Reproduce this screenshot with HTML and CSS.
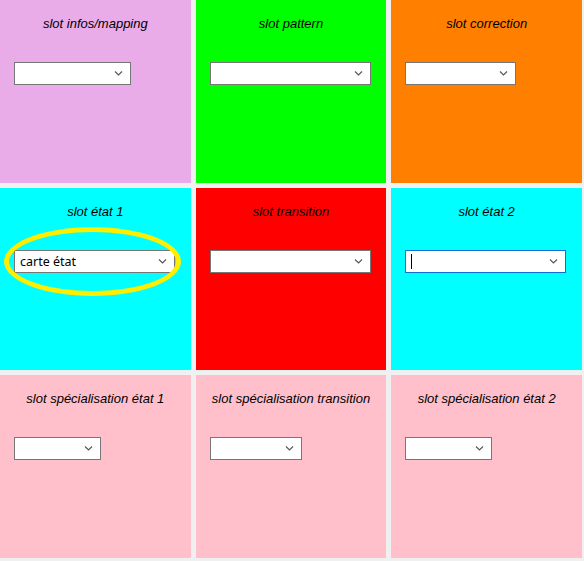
FILE: index.html
```html
<!DOCTYPE html>
<html>
<head>
<meta charset="utf-8">
<link rel="stylesheet" href="styles.css">
</head>
<body>
<div class="grid">
  <div class="cell c-plum">
    <div class="title">slot infos/mapping</div>
    <div class="combo w117"><span class="val"></span><svg class="chev" width="9" height="5" viewBox="0 0 9 5"><path d="M1 0.5 L4.5 4 L8 0.5" fill="none" stroke="#555" stroke-width="1.1"/></svg></div>
  </div>
  <div class="cell c-green">
    <div class="title">slot pattern</div>
    <div class="combo w161"><span class="val"></span><svg class="chev" width="9" height="5" viewBox="0 0 9 5"><path d="M1 0.5 L4.5 4 L8 0.5" fill="none" stroke="#555" stroke-width="1.1"/></svg></div>
  </div>
  <div class="cell c-orange">
    <div class="title">slot correction</div>
    <div class="combo w111"><span class="val"></span><svg class="chev" width="9" height="5" viewBox="0 0 9 5"><path d="M1 0.5 L4.5 4 L8 0.5" fill="none" stroke="#555" stroke-width="1.1"/></svg></div>
  </div>
  <div class="cell c-cyan">
    <div class="title">slot état 1</div>
    <div class="combo w161"><span class="val">carte état</span><svg class="chev" width="9" height="5" viewBox="0 0 9 5"><path d="M1 0.5 L4.5 4 L8 0.5" fill="none" stroke="#555" stroke-width="1.1"/></svg></div>
    <div class="ring"></div>
  </div>
  <div class="cell c-red">
    <div class="title">slot transition</div>
    <div class="combo w161"><span class="val"></span><svg class="chev" width="9" height="5" viewBox="0 0 9 5"><path d="M1 0.5 L4.5 4 L8 0.5" fill="none" stroke="#555" stroke-width="1.1"/></svg></div>
  </div>
  <div class="cell c-cyan">
    <div class="title">slot état 2</div>
    <div class="combo w161 focused"><span class="val"><span class="caret"></span></span><svg class="chev" width="9" height="5" viewBox="0 0 9 5"><path d="M1 0.5 L4.5 4 L8 0.5" fill="none" stroke="#555" stroke-width="1.1"/></svg></div>
  </div>
  <div class="cell c-pink">
    <div class="title">slot spécialisation état 1</div>
    <div class="combo w87"><span class="val"></span><svg class="chev" width="9" height="5" viewBox="0 0 9 5"><path d="M1 0.5 L4.5 4 L8 0.5" fill="none" stroke="#555" stroke-width="1.1"/></svg></div>
  </div>
  <div class="cell c-pink">
    <div class="title">slot spécialisation transition</div>
    <div class="combo w92"><span class="val"></span><svg class="chev" width="9" height="5" viewBox="0 0 9 5"><path d="M1 0.5 L4.5 4 L8 0.5" fill="none" stroke="#555" stroke-width="1.1"/></svg></div>
  </div>
  <div class="cell c-pink">
    <div class="title">slot spécialisation état 2</div>
    <div class="combo w87"><span class="val"></span><svg class="chev" width="9" height="5" viewBox="0 0 9 5"><path d="M1 0.5 L4.5 4 L8 0.5" fill="none" stroke="#555" stroke-width="1.1"/></svg></div>
  </div>
</div>
</body>
</html>
```
FILE: styles.css
```css
html, body {
  margin: 0;
  padding: 0;
  background: #f0f0f0;
}
.grid {
  width: 582px;
  height: 558px;
  display: grid;
  grid-template-columns: repeat(3, 1fr);
  grid-template-rows: repeat(3, 1fr);
  gap: 5px;
}
.cell {
  position: relative;
  padding-top: 16px;
  box-sizing: border-box;
  min-width: 0;
}
.c-plum { background: #eaace8; }
.c-green { background: #00ff00; }
.c-orange { background: #ff8000; }
.c-cyan { background: #00ffff; }
.c-red { background: #ff0000; }
.c-pink { background: #ffc0cb; }
.title {
  font-family: "Liberation Sans", Arial, sans-serif;
  font-style: italic;
  font-size: 13px;
  line-height: 15px;
  text-align: center;
  white-space: nowrap;
  color: #000;
}
.combo {
  margin: 31px 0 0 14px;
  height: 23px;
  box-sizing: border-box;
  border: 1px solid #767676;
  background: #fff;
  display: flex;
  align-items: center;
  padding: 0 7px 0 5px;
  font-family: "Noto Sans", "Open Sans", sans-serif;
  font-size: 12.5px;
  color: #000;
}
.combo.focused {
  border-color: #0f6fd6;
}
.val {
  flex: 1;
  display: flex;
  align-items: center;
  white-space: nowrap;
}
.caret {
  display: block;
  width: 1px;
  height: 15px;
  background: #000;
}
.chev { flex: none; }
.w117 { width: 117px; }
.w161 { width: 161px; }
.w111 { width: 111px; }
.w87 { width: 87px; }
.w92 { width: 92px; }
.ring {
  position: absolute;
  left: 4px;
  top: 39px;
  width: 177px;
  height: 69px;
  box-sizing: border-box;
  border: 5px solid #ffee00;
  border-radius: 50%;
}
```
